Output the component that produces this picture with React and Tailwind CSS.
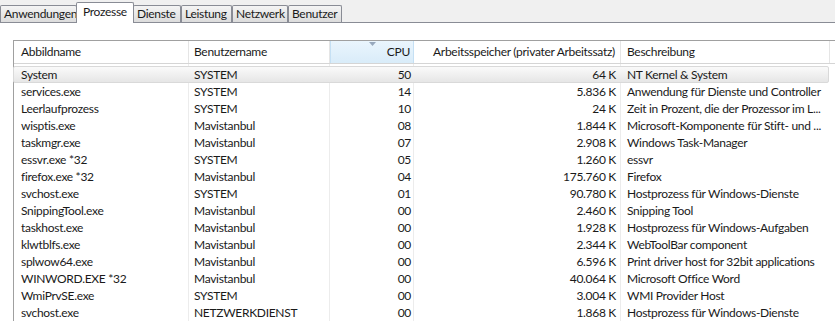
import React from "react";

const tabs = [
  { label: "Anwendungen", w: "w-[77px]" },
  { label: "Prozesse", w: "w-[58px]", active: true },
  { label: "Dienste", w: "w-[48px]" },
  { label: "Leistung", w: "w-[51px]" },
  { label: "Netzwerk", w: "w-[56px]" },
  { label: "Benutzer", w: "w-[54px]" },
];

const rows = [
  ["System", "SYSTEM", "50", "64 K", "NT Kernel & System"],
  ["services.exe", "SYSTEM", "14", "5.836 K", "Anwendung für Dienste und Controller"],
  ["Leerlaufprozess", "SYSTEM", "10", "24 K", "Zeit in Prozent, die der Prozessor im L..."],
  ["wisptis.exe", "Mavistanbul", "08", "1.844 K", "Microsoft-Komponente für Stift- und ..."],
  ["taskmgr.exe", "Mavistanbul", "07", "2.908 K", "Windows Task-Manager"],
  ["essvr.exe *32", "SYSTEM", "05", "1.260 K", "essvr"],
  ["firefox.exe *32", "Mavistanbul", "04", "175.760 K", "Firefox"],
  ["svchost.exe", "SYSTEM", "01", "90.780 K", "Hostprozess für Windows-Dienste"],
  ["SnippingTool.exe", "Mavistanbul", "00", "2.460 K", "Snipping Tool"],
  ["taskhost.exe", "Mavistanbul", "00", "1.928 K", "Hostprozess für Windows-Aufgaben"],
  ["klwtblfs.exe", "Mavistanbul", "00", "2.344 K", "WebToolBar component"],
  ["splwow64.exe", "Mavistanbul", "00", "6.596 K", "Print driver host for 32bit applications"],
  ["WINWORD.EXE *32", "Mavistanbul", "00", "40.064 K", "Microsoft Office Word"],
  ["WmiPrvSE.exe", "SYSTEM", "00", "3.004 K", "WMI Provider Host"],
  ["svchost.exe", "NETZWERKDIENST", "00", "1.868 K", "Hostprozess für Windows-Dienste"],
];

const cols = "grid grid-cols-[175px_141px_84px_207px_1fr]";

export default function App() {
  return (
    <div className="w-[835px] h-[324px] overflow-hidden bg-white text-[12px] tracking-[-0.3px] text-[#1a1a1a] font-['Lato',sans-serif]">
      {/* Tabs */}
      <div className="h-[23px] bg-[#f0f0f0] border-b border-[#898c95] flex items-end">
        {tabs.map((t) =>
          t.active ? (
            <div
              key={t.label}
              className={`${t.w} h-[21px] -mb-px -mx-px z-10 bg-white border border-b-0 border-[#898c95] rounded-t-[2px] pl-[6px] pt-[2px] leading-[14px]`}
            >
              {t.label}
            </div>
          ) : (
            <div
              key={t.label}
              className={`${t.w} h-[17px] bg-gradient-to-b from-[#f4f4f4] to-[#dcdcdc] border border-b-0 border-[#898c95] rounded-t-[2px] pl-[3px] leading-[15px] whitespace-nowrap`}
            >
              {t.label}
            </div>
          )
        )}
      </div>

      {/* List */}
      <div className="pl-[13px] pt-[17px]">
        <div className="border-l border-t border-[#a0a0a0]">
          <div className={`${cols} h-[23px] border-b border-[#d5d5d5] leading-[22px]`}>
            <div className="pl-[7px] border-r border-[#e5e5e5]">Abbildname</div>
            <div className="pl-[5px] border-r border-[#e5e5e5]">Benutzername</div>
            <div className="relative pr-[3px] text-right bg-gradient-to-b from-[#eaf5fd] to-[#d9ecf9] border-x border-[#c5e0f4]">
              <svg className="absolute left-[38px] top-[1px]" width="8" height="5" viewBox="0 0 8 5">
                <path d="M0 0H7L3.5 4Z" fill="#97a8bd" />
              </svg>
              CPU
            </div>
            <div className="pr-[5px] text-right border-r border-[#e5e5e5] whitespace-nowrap">Arbeitsspeicher (privater Arbeitssatz)</div>
            <div className="pl-[6px] border-r border-[#e5e5e5] mr-[5px]">Beschreibung</div>
          </div>

          <div className="relative pt-[2px]">
            <div className="absolute inset-0 flex pointer-events-none">
              <div className="w-[175px] border-r border-[#ececec]" />
              <div className="w-[141px] border-r border-[#ececec]" />
              <div className="w-[84px] border-r border-[#ececec]" />
              <div className="w-[207px] border-r border-[#ececec]" />
            </div>
            {rows.map((r, i) => (
              <div
                key={i}
                className={`relative ${cols} h-[17px] leading-[16px] -ml-px mr-[6px] border rounded-[2px] ${
                  i === 0
                    ? "bg-gradient-to-b from-[#fafafa] to-[#e6e6e6] border-[#d9d9d9]"
                    : "border-transparent"
                }`}
              >
                <div className="pl-[7px] whitespace-nowrap">{r[0]}</div>
                <div className="pl-[5px] whitespace-nowrap">{r[1]}</div>
                <div className="pr-[3px] text-right">{r[2]}</div>
                <div className="pr-[5px] text-right whitespace-nowrap">{r[3]}</div>
                <div className="pl-[6px] whitespace-nowrap overflow-hidden">{r[4]}</div>
              </div>
            ))}
          </div>
        </div>
      </div>
    </div>
  );
}
